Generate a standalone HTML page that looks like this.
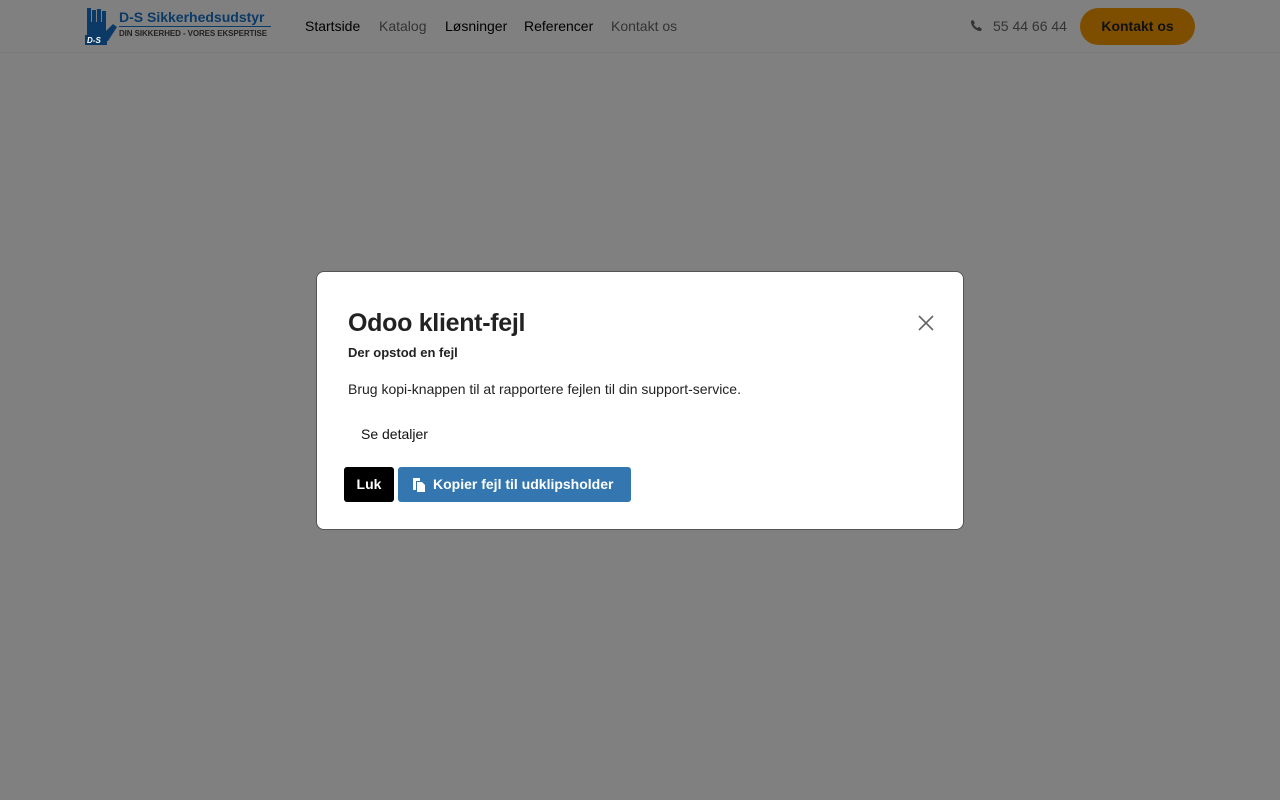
<!DOCTYPE html>
<html><head><meta charset="utf-8"><style>
*{box-sizing:border-box;margin:0;padding:0}
body{width:1280px;height:800px;background:#808080;font-family:"Liberation Sans",sans-serif;position:relative;overflow:hidden}
.hdr{position:absolute;left:0;top:0;width:1280px;height:53px;border-bottom:1px solid #7a7a7a;background:#808080}
.nav{position:absolute;top:18px;font-size:14px;color:#000}
.nav span{position:absolute;white-space:nowrap}
.modal{position:absolute;left:316px;top:271px;width:648px;height:259px;background:#fff;border:1px solid #555;border-radius:8px}
</style></head><body>
<div class="hdr">
 <svg style="position:absolute;left:85px;top:8px" width="34" height="37" viewBox="0 0 34 37">
  <path d="M2 0h4v14h1V2h4v12h1V1h4v13h1V3h4v20l7-7 4 3-9 14H2z" fill="#0b3a66"/>
  <rect x="0" y="27" width="22" height="10" fill="#0b3a66"/>
  <text x="2" y="35" font-size="8" fill="#fff" font-weight="bold" font-style="italic">D-S</text>
 </svg>
 <div style="position:absolute;left:119px;top:9px;font-size:14px;font-weight:bold;color:#0b3a66">D-S Sikkerhedsudstyr</div>
 <div style="position:absolute;left:119px;top:26px;width:152px;height:1px;background:#0b3a66"></div>
 <div style="position:absolute;left:119px;top:29px;font-size:8px;color:#222;font-weight:bold;letter-spacing:-0.1px">DIN SIKKERHED - VORES EKSPERTISE</div>
 <div class="nav">
  <span style="left:305px">Startside</span>
  <span style="left:379px;color:#333">Katalog</span>
  <span style="left:445px">Løsninger</span>
  <span style="left:524px">Referencer</span>
  <span style="left:611px;color:#333">Kontakt os</span>
 </div>
 <svg style="position:absolute;left:970px;top:19px" width="13" height="13" viewBox="0 0 13 13"><path d="M3 1l2 3-1.3 1.3c.8 1.6 2.2 3 3.8 3.8L8.8 7.8l3 2-.8 2.2C6 12.5.5 7 1 2z" fill="#333"/></svg>
 <div style="position:absolute;left:993px;top:18px;font-size:14px;color:#333">55 44 66 44</div>
 <div style="position:absolute;left:1080px;top:8px;width:115px;height:37px;border-radius:19px;background:#7e4e00;color:#111;font-weight:bold;font-size:14px;text-align:center;line-height:37px">Kontakt os</div>
</div>
<div class="modal">
 <div style="position:absolute;left:31px;top:37px;font-size:25px;font-weight:bold;color:#222;letter-spacing:-0.3px">Odoo klient-fejl</div>
 <div style="position:absolute;left:31px;top:73px;font-size:13px;font-weight:bold;color:#222">Der opstod en fejl</div>
 <div style="position:absolute;left:31px;top:109px;font-size:14px;color:#222">Brug kopi-knappen til at rapportere fejlen til din support-service.</div>
 <div style="position:absolute;left:44px;top:154px;font-size:14px;color:#111">Se detaljer</div>
 <svg style="position:absolute;left:600px;top:42px" width="18" height="18" viewBox="0 0 18 18"><path d="M2 2L16 16M16 2L2 16" stroke="#666" stroke-width="1.6"/></svg>
 <div style="position:absolute;left:27px;top:195px;width:50px;height:35px;background:#000;color:#fff;border-radius:3px;font-weight:bold;font-size:14px;text-align:center;line-height:35px">Luk</div>
 <div style="position:absolute;left:81px;top:195px;width:233px;height:35px;background:#3477b0;color:#fff;border-radius:3px;font-weight:bold;font-size:14px;line-height:35px;padding-left:35px">Kopier fejl til udklipsholder</div>
 <svg style="position:absolute;left:95px;top:205px" width="14" height="15" viewBox="0 0 14 15"><path d="M1 1h7v3H4v9H1z" fill="#fff"/><path d="M5 5h5l3 3v7H5z" fill="#fff"/></svg>
</div>
</body></html>
